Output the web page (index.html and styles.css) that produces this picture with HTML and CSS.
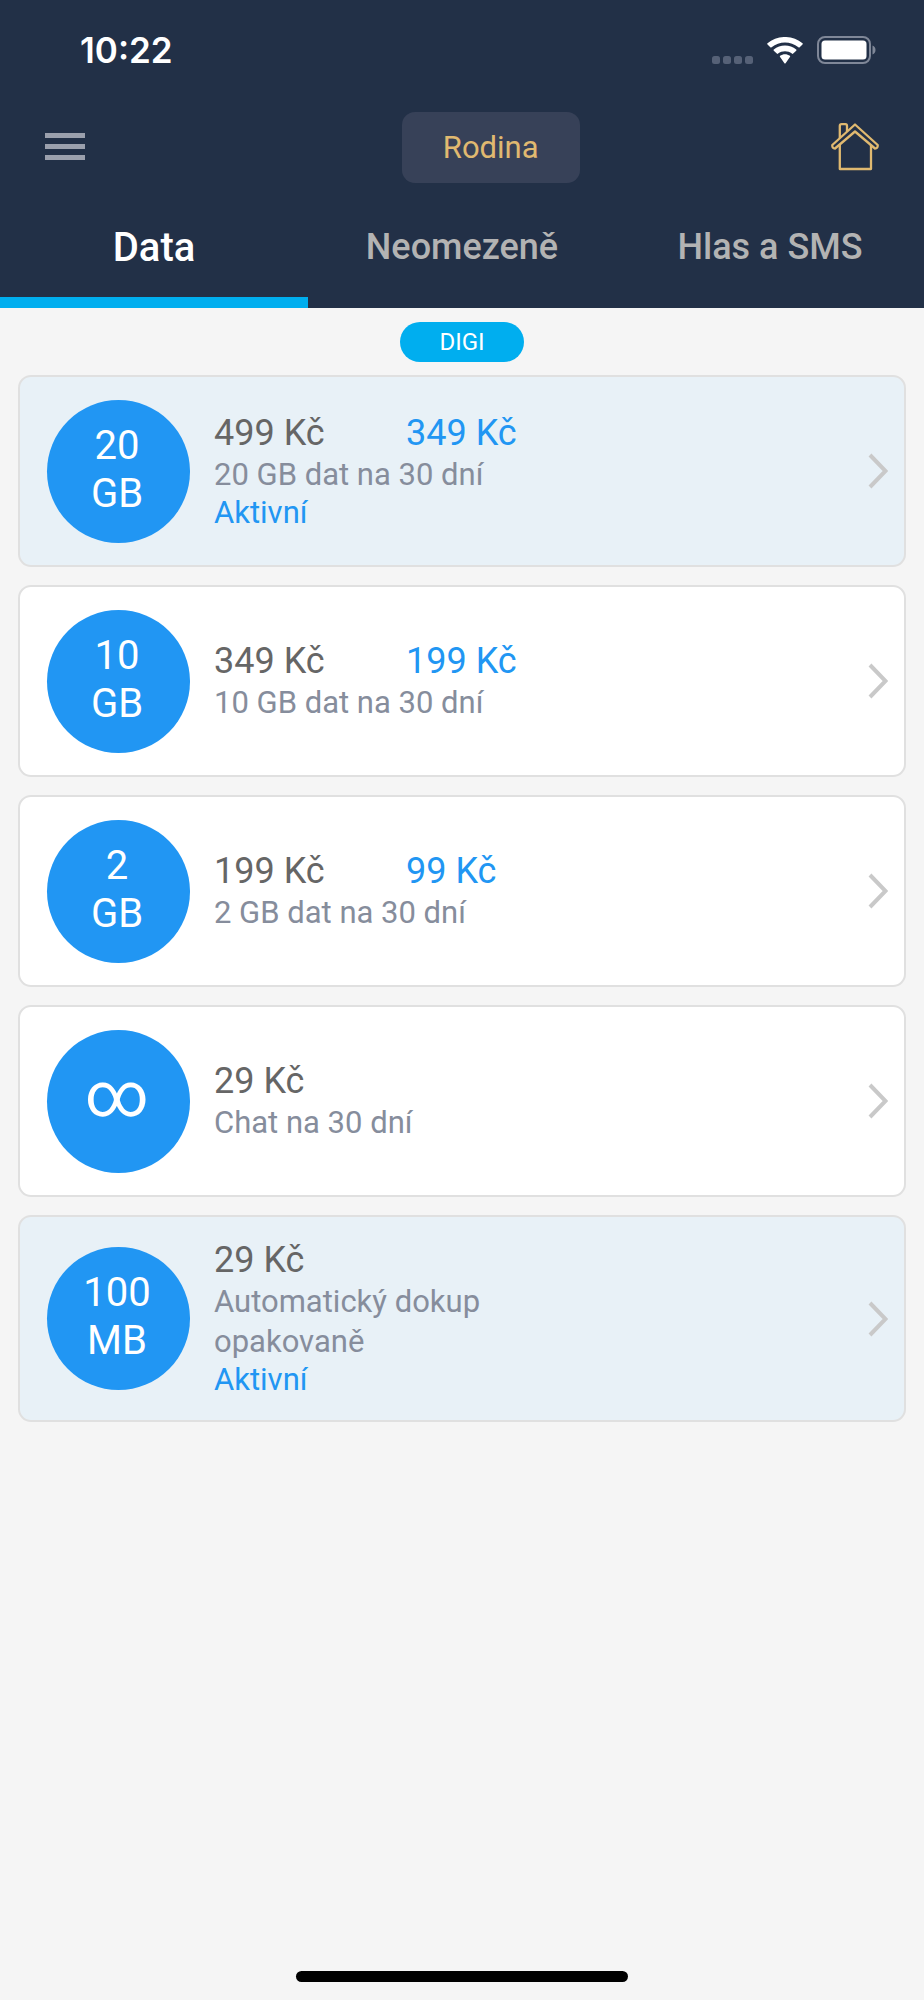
FILE: index.html
```html
<!DOCTYPE html>
<html lang="cs">
<head>
<meta charset="utf-8">
<meta name="viewport" content="width=device-width, initial-scale=1">
<title>Rodina – Data</title>
<link rel="stylesheet" href="styles.css">
</head>
<body>
<header class="header">
  <div class="status">
    <time class="clock">10:22</time>
    <div class="status-icons">
      <svg width="41" height="27" viewBox="0 0 41 27" fill="#566177" aria-hidden="true">
        <rect x="0" y="19" width="8" height="8" rx="2.5"/><rect x="11" y="19" width="8" height="8" rx="2.5"/><rect x="22" y="19" width="8" height="8" rx="2.5"/><rect x="33" y="19" width="8" height="8" rx="2.5"/>
      </svg>
      <svg class="wifi" width="36" height="27" viewBox="0 0 36 27" fill="#fff" aria-hidden="true">
        <path d="M.5 7.400a.8.8 0 0 1 0-1.200C10-2.100 26-2.100 35.500 6.200a.8.8 0 0 1 0 1.200L32.700 10.200a1 1 0 0 1-1.300 0C23.700 3.800 12.300 3.800 4.600 10.200a1 1 0 0 1-1.300 0z"/>
        <path d="M6.800 13.700a.8.8 0 0 1 0-1.200C13 7.200 23 7.200 29.200 12.500a.8.8 0 0 1 0 1.200L26.200 16.600a1 1 0 0 1-1.300 0C21 13.500 15 13.500 11.100 16.600a1 1 0 0 1-1.300 0z"/>
        <path d="M13.100 19.900a.8.8 0 0 1 0-1.200C15.900 16.600 20.100 16.600 22.900 18.700a.8.8 0 0 1 0 1.200L18.600 26.200a.9.9 0 0 1-1.200 0z"/>
      </svg>
      <svg width="59" height="28" viewBox="0 0 59 28" aria-hidden="true">
        <rect x="1" y="1" width="52" height="26" rx="7" fill="none" stroke="#7f8798" stroke-width="2"/>
        <rect x="4.500" y="4.500" width="45" height="19" rx="3.500" fill="#fff"/>
        <path d="M55.500 9.500c4 1.500 4 7.500 0 9z" fill="#7f8798"/>
      </svg>
    </div>
  </div>
  <div class="toolbar">
    <button class="icon-button" type="button" aria-label="Menu">
      <svg width="40" height="27" viewBox="0 0 40 27" fill="#9ba0ad" aria-hidden="true"><path d="M0 0h40v5H0zM0 11h40v5H0zM0 22h40v5H0z"/></svg>
    </button>
    <button class="family" type="button">Rodina</button>
    <button class="icon-button home" type="button" aria-label="Domů">
      <svg width="48" height="48" viewBox="0 0 48 48" fill="none" stroke="#e0b970" stroke-width="2.300" stroke-linejoin="round" aria-hidden="true">
        <path d="M24 1.500 46.700 22Q47 25.500 44 25.500L24 8.500 4 25.500Q1 25.500 1.300 22z"/>
        <path d="M8.800 15V3Q8.800 1.200 10.500 1.200H14.500Q16 1.200 16 3V8.500"/>
        <path d="M8.800 22V46H40V22"/>
      </svg>
    </button>
  </div>
  <nav class="tabs" role="tablist" aria-label="Balíčky">
    <button class="tab tab-active" type="button" role="tab" aria-selected="true">Data</button>
    <button class="tab" type="button" role="tab" aria-selected="false">Neomezeně</button>
    <button class="tab" type="button" role="tab" aria-selected="false">Hlas a SMS</button>
  </nav>
</header>
<main class="content">
  <h1 class="pill">DIGI</h1>
  <a class="card card-on" href="#data-20">
    <span class="badge">20<br>GB</span>
    <span class="info">
      <span class="prices"><span>499 Kč</span><span class="sale">349 Kč</span></span>
      <span class="desc">20 GB dat na 30 dní</span>
      <span class="state">Aktivní</span>
    </span>
    <svg class="chevron" viewBox="0 0 20 36" aria-hidden="true"><path d="M2 2 17.500 18 2 34"/></svg>
  </a>
  <a class="card" href="#data-10">
    <span class="badge">10<br>GB</span>
    <span class="info">
      <span class="prices"><span>349 Kč</span><span class="sale">199 Kč</span></span>
      <span class="desc">10 GB dat na 30 dní</span>
    </span>
    <svg class="chevron" viewBox="0 0 20 36" aria-hidden="true"><path d="M2 2 17.500 18 2 34"/></svg>
  </a>
  <a class="card" href="#data-2">
    <span class="badge">2<br>GB</span>
    <span class="info">
      <span class="prices"><span>199 Kč</span><span class="sale">99 Kč</span></span>
      <span class="desc">2 GB dat na 30 dní</span>
    </span>
    <svg class="chevron" viewBox="0 0 20 36" aria-hidden="true"><path d="M2 2 17.500 18 2 34"/></svg>
  </a>
  <a class="card" href="#chat">
    <span class="badge badge-infinity">∞</span>
    <span class="info">
      <span class="prices"><span>29 Kč</span></span>
      <span class="desc">Chat na 30 dní</span>
    </span>
    <svg class="chevron" viewBox="0 0 20 36" aria-hidden="true"><path d="M2 2 17.500 18 2 34"/></svg>
  </a>
  <a class="card card-on" href="#auto-100">
    <span class="badge">100<br>MB</span>
    <span class="info">
      <span class="prices"><span>29 Kč</span></span>
      <span class="desc">Automatický dokup opakovaně</span>
      <span class="state">Aktivní</span>
    </span>
    <svg class="chevron" viewBox="0 0 20 36" aria-hidden="true"><path d="M2 2 17.500 18 2 34"/></svg>
  </a>
</main>
<footer class="footer"><div class="home-bar"></div></footer>
</body>
</html>
```
FILE: styles.css
```css
* { box-sizing: border-box; }

body {
  margin: 0;
  min-height: 100vh;
  display: flex;
  flex-direction: column;
  background: #f5f5f5;
  font-family: Roboto, "Liberation Sans", sans-serif;
}

button {
  border: 0;
  padding: 0;
  background: none;
  font: inherit;
}

.header { background: #223047; }

.status {
  display: flex;
  justify-content: space-between;
  align-items: center;
  padding: 28px 48px 0 80px;
}

.clock {
  color: #fff;
  font: 600 35px/44px Inter, Roboto, sans-serif;
}

.status-icons {
  display: flex;
  align-items: center;
}

.wifi { margin: 0 14px; }

.toolbar {
  display: grid;
  grid-template-columns: 7fr auto 6fr;
  align-items: center;
  padding-top: 40px;
}

.icon-button {
  display: flex;
  justify-self: start;
  margin: 0 45px;
  padding-bottom: 2px;
}

.icon-button svg { display: block; }

.home { justify-self: end; }

.family {
  padding: 0 41px;
  border-radius: 13px;
  background: #374158;
  color: #e0b970;
  font-size: 31px;
  line-height: 71px;
}

.tabs {
  display: grid;
  grid-template-columns: repeat(3, 1fr);
  height: 125px;
}

.tab {
  padding: 14px 0 0;
  border-bottom: 11px solid transparent;
  color: #b3b3b3;
  font-size: 36px;
  font-weight: 500;
}

.tab-active {
  border-bottom-color: #00aeef;
  color: #fff;
  font-size: 40px;
}

.content {
  flex: 1;
  display: flex;
  flex-direction: column;
  gap: 18px;
  padding: 14px 18px;
}

.pill {
  align-self: center;
  margin: 0 0 -5px;
  padding: 0 39px;
  border-radius: 20px;
  background: #00aeef;
  color: #fff;
  font-size: 24px;
  font-weight: 400;
  line-height: 40px;
}

.card {
  display: flex;
  align-items: center;
  min-height: 192px;
  padding: 22px 16px 22px 27px;
  border: 2px solid #e0e0e0;
  border-radius: 13px;
  background: #fff;
  color: #666;
  text-decoration: none;
}

.card-on { background: #e8f1f7; }

.badge {
  flex: none;
  display: grid;
  place-content: center;
  width: 143px;
  height: 143px;
  padding: 0 3px 3px 0;
  border-radius: 50%;
  background: #2196f3;
  color: #fff;
  font-size: 40px;
  line-height: 48px;
  text-align: center;
}

.badge-infinity {
  padding-bottom: 12px;
  font-size: 62px;
}

.info {
  display: flex;
  flex-direction: column;
  width: 384px;
  margin-left: 24px;
}

.prices {
  display: grid;
  grid-template-columns: 1fr 1fr;
  font-size: 36px;
  line-height: 42px;
}

.desc {
  padding-top: 1px;
  color: #868d9c;
  font-size: 31px;
  line-height: 40px;
}

.state {
  font-size: 31px;
  line-height: 36px;
}

.sale, .state { color: #2196f3; }

.chevron {
  width: 20px;
  height: 36px;
  margin-left: auto;
  fill: none;
  stroke: #c9c9c9;
  stroke-width: 4;
}

.footer {
  display: flex;
  justify-content: center;
  padding-bottom: 18px;
}

.home-bar {
  width: 36%;
  height: 11px;
  border-radius: 6px;
  background: #000;
}
```
